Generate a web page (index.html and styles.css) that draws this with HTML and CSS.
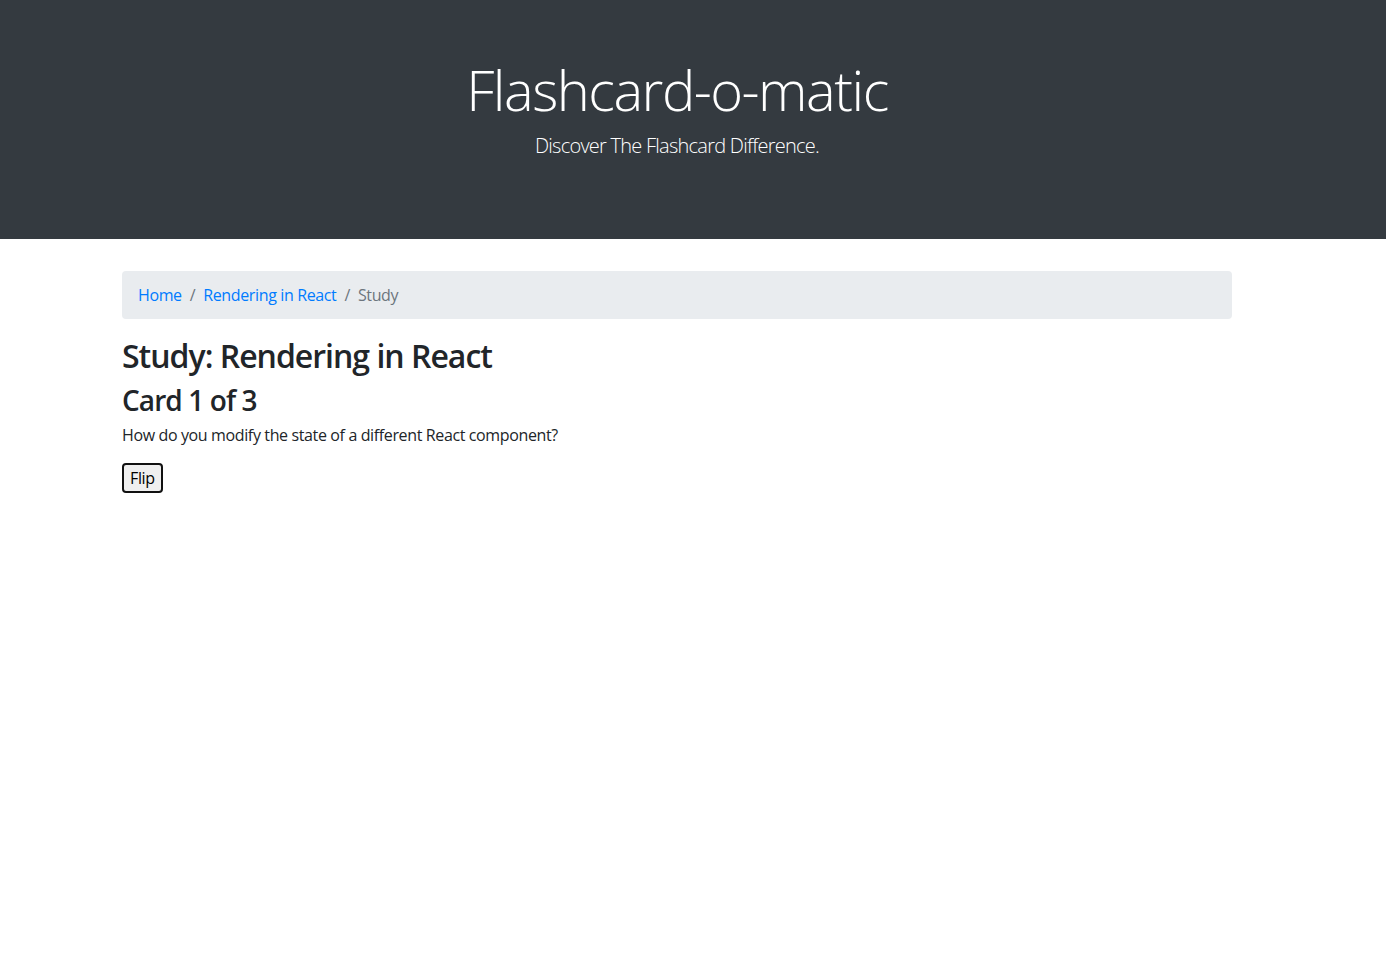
FILE: index.html
```html
<!DOCTYPE html>
<html lang="en">
<head>
<meta charset="utf-8">
<title>Flashcard-o-matic</title>
<link rel="stylesheet" href="styles.css">
</head>
<body>
<div class="page">
  <header class="jumbotron">
    <h1 class="title">Flashcard-o-matic</h1>
    <p class="lead">Discover The Flashcard Difference.</p>
  </header>
  <div class="content">
    <main class="container">
      <nav class="breadcrumb">
        <a href="#" class="crumb-link">Home</a>
        <span class="sep">/</span>
        <a href="#" class="crumb-link">Rendering in React</a>
        <span class="sep">/</span>
        <span class="crumb-active">Study</span>
      </nav>
      <h2 class="study-title">Study: Rendering in React</h2>
      <h3 class="card-count">Card 1 of 3</h3>
      <p class="card-text">How do you modify the state of a different React component?</p>
      <button class="flip-btn" type="button">Flip</button>
    </main>
  </div>
</div>
</body>
</html>
```
FILE: styles.css
```css
html, body {
  margin: 0;
  padding: 0;
  background: #fff;
}
body {
  font-family: "Open Sans", "Noto Sans", sans-serif;
  font-size: 16px;
  line-height: 1.5;
  color: #212529;
  letter-spacing: -0.37px;
}
.jumbotron {
  background: #343a40;
  color: #fff;
  text-align: center;
  padding: 56px 64px 78px 32px;
  margin: 0 0 32px;
}
.title {
  margin: 0 0 8px;
  font-size: 56px;
  font-weight: 300;
  line-height: 1.2;
  letter-spacing: -1.5px;
}
.lead {
  margin: 0;
  font-size: 20px;
  font-weight: 300;
  line-height: 1.5;
  letter-spacing: -0.75px;
}
.content {
  padding-right: 32px;
}
.container {
  width: 1110px;
  margin: 0 auto;
}
.breadcrumb {
  display: flex;
  align-items: center;
  background: #e9ecef;
  border-radius: 4px;
  padding: 12px 16px;
  margin-bottom: 16px;
}
.crumb-link {
  color: #007bff;
  text-decoration: none;
}
.sep {
  color: #6c757d;
  padding: 0 8px;
}
.crumb-active {
  color: #6c757d;
}
.study-title {
  margin: 0 0 8px;
  padding-top: 2px;
  font-size: 32px;
  font-weight: 600;
  line-height: 1.2;
  letter-spacing: -1px;
}
.card-count {
  margin: 0 0 6px;
  font-size: 28px;
  font-weight: 600;
  line-height: 1.2;
  letter-spacing: -0.9px;
}
.card-text {
  margin: 0 0 16px;
}
.flip-btn {
  font-family: inherit;
  font-size: 16px;
  letter-spacing: -0.37px;
  line-height: 24px;
  color: #000;
  background: #efefef;
  border: 2px solid #111;
  border-radius: 4px;
  padding: 1px 6px;
  height: 30px;
  cursor: pointer;
}
```
